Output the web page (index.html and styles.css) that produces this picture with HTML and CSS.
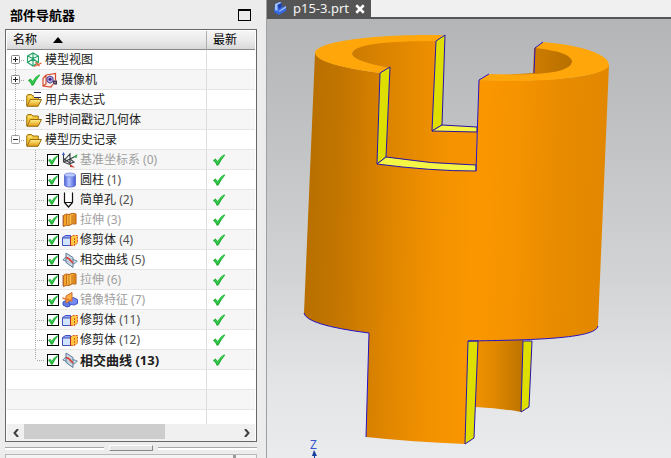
FILE: index.html
```html
<!DOCTYPE html>
<html lang="zh-CN">
<head>
<meta charset="utf-8">
<title>部件导航器</title>
<link rel="stylesheet" href="styles.css">
</head>
<body>
<svg class="defs" aria-hidden="true">
  <defs>
    <linearGradient id="gold" x1="0" y1="0" x2="0" y2="1"><stop offset="0" stop-color="#fff08a"/><stop offset="1" stop-color="#e09a10"/></linearGradient>
    <linearGradient id="blue" x1="0" x2="1"><stop offset="0" stop-color="#4a62dc"/><stop offset=".4" stop-color="#b4c4ff"/><stop offset="1" stop-color="#4458d8"/></linearGradient>
    <linearGradient id="amber" x1="0" x2="1"><stop offset="0" stop-color="#f29a1c"/><stop offset=".5" stop-color="#ffc653"/><stop offset="1" stop-color="#f09418"/></linearGradient>
  </defs>
  <symbol id="tick" viewBox="0 0 12 12"><path d="M0 6.300 2.600 4.500 4.500 7Q7 2.500 11.400.2L12 1.500Q8 6 5.600 11.300L3.800 11.700Q2.400 8.500 0 6.300Z" fill="#1fae36"/><path d="M2.300 6.200 4.500 9Q7 4.400 10.500 1.800" fill="none" stroke="#3fd056" stroke-width="1.100"/></symbol>
  <symbol id="views" viewBox="0 0 16 16"><path d="M1.500 4 7 1l5.500 3v6.500L7 14l-5.500-3.500ZM1.500 4 7 6.500 12.500 4M7 6.500V14M7 1v5.500M1.500 10.500 7 7l5.500 3.500" fill="#dff6ea" fill-opacity=".5" stroke="#25a068" stroke-width="1.100"/><path d="m8 14.500 7.500-3.500m-6-1 4 4" stroke="#e06032" stroke-width="1.300"/></symbol>
  <symbol id="camera" viewBox="0 0 16 16"><path d="m4 3 9.500-1.500v7M4 3 1 6.500V14l8 1 2-3M4 3v9l-3 2" fill="#fff0e8" stroke="#d34a31" stroke-width="1.200"/><path d="m5 5.500 3-1.500 3 1.500v4l-3 1.700-3-1.700Z" fill="#b9b0e2" stroke="#483a91"/><circle cx="8" cy="7.300" r="1.500" fill="#3a237f"/><path d="M11 8.500h4v4h-3l-1-1Z" fill="#44354d"/><path d="M12.500 10h1v1h-1z" fill="#ddd"/></symbol>
  <symbol id="folder" viewBox="0 0 16 16"><path d="M.7 14V3.700L2 2.500h3.500L7 4h5.300v3.500" fill="#f3c637" stroke="#9c7318"/><path d="M1 14.300 4.300 7.500h11.200L12 14.300Z" fill="url(#gold)" stroke="#9a6b0b"/><path d="M2 5h4" stroke="#fff4a0"/></symbol>
  <symbol id="csys" viewBox="0 0 16 16"><path d="M1.500 2v8L9 13M1.500 9 8 2v9L1.500 6.500M2 10 12 5M8 7l4 3-5 2" fill="none" stroke="#383e42" stroke-width="1.100"/><path d="M0 3 1.500 0 3 3" fill="#3854c8"/><path d="m11 5 4.500-3-1 4Z" fill="#30a24a"/><path d="m8 12 5 3.500-5-.5Z" fill="#c44033"/></symbol>
  <symbol id="cylinder" viewBox="0 0 16 16"><path d="M2.500 3v10c0 2.700 11 2.700 11 0V3Z" fill="url(#blue)" stroke="#5264c0" stroke-width=".8"/><ellipse cx="8" cy="3" rx="5.500" ry="2" fill="#b8caff" stroke="#7686d8" stroke-width=".8"/></symbol>
  <symbol id="hole" viewBox="0 0 16 16"><path d="M2.500.5V10.500l4 4.500 4-4.500V.5M2.500 10.500h8" fill="#fff" stroke="#111" stroke-width="1.200"/></symbol>
  <symbol id="extrude" viewBox="0 0 16 16"><path d="M1.500 3.500Q4 1 7 2.500q3-2 7-.5v10q-4-1-7 1.500-3-1-5.500 1Z" fill="url(#amber)" stroke="#b75b14"/><path d="M4.500 3v9.500M7 3v10M10 3v9M12 3v8" stroke="#bb6716" stroke-width=".9"/><path d="M1 3v11" stroke="#bb744c"/></symbol>
  <symbol id="trim" viewBox="0 0 16 16"><path d="M.5 13.500v-8l3-2h5v10Z" fill="#8fa6f2" stroke="#4251bd"/><path d="M1 6h7v7H1z" fill="#d3e4ff"/><path d="M.5 6H8" stroke="#4251bd"/><path d="m8.500 6 2-2.500h5v7.500l-3 2.500h-4Z" fill="#ffc83e"/><path d="m8.500 5.500 2-2h5V11l-3 2.500h-4ZM12.500 6v7" fill="none" stroke="#d8572f" stroke-dasharray="2 1"/><path d="M8.500 5v9" stroke="#bd2734"/></symbol>
  <symbol id="curve" viewBox="0 0 16 16"><path d="m.8 8 3-3 11.500 4-3 3Z" fill="#ccdce9" stroke="#66889f"/><path d="m4 1 7 4.500v10L4 10.500Z" fill="#c3d3df" fill-opacity=".8" stroke="#597c97"/><path d="m4 5.500 2.500 1 4.500 4.500" fill="none" stroke="#df3e37" stroke-width="1.700"/></symbol>
  <symbol id="mirror" viewBox="0 0 16 16"><path d="m1 10 3-1.500 4 1.500v4l-3 1-4-2Z" fill="#617be4" stroke="#3f54bf"/><path d="m7 8 4-2.500 4.500 2v4L12 13l-5-1Z" fill="#7189f1" stroke="#4257c5"/><path d="m4 4 6-3.500v7L4 11Z" fill="#ffb044" stroke="#cb6c34"/><path d="m.5 6 10 3" stroke="#e37833" stroke-width="1.500"/></symbol>
  <symbol id="plus" viewBox="0 0 9 9"><rect x=".5" y=".5" width="8" height="8" rx="1" fill="#fff" stroke="#888"/><path d="M2 4.500h5M4.500 2v5" stroke="#222"/></symbol>
  <symbol id="minus" viewBox="0 0 9 9"><rect x=".5" y=".5" width="8" height="8" rx="1" fill="#fff" stroke="#999"/><path d="M2 4.500h5" stroke="#222"/></symbol>
</svg>

<aside class="navigator">
  <header class="title"><h1>部件导航器</h1><button class="restore" aria-label="最大化"></button></header>
  <section class="tree">
    <div class="rows">
    <table>
      <colgroup><col><col class="status-col"></colgroup>
      <thead><tr><th><button class="sort">名称<svg viewBox="0 0 10 6"><path d="M5 0 10 6H0Z"/></svg></button></th><th>最新</th></tr></thead>
      <tbody>
        <tr><td><div class="item"><span class="branch first"><button class="expander" aria-label="展开"><svg><use href="#plus"/></svg></button></span><svg class="icon"><use href="#views"/></svg><span>模型视图</span></div></td><td></td></tr>
        <tr><td><div class="item"><span class="branch"><button class="expander" aria-label="展开"><svg><use href="#plus"/></svg></button></span><svg class="tick lead"><use href="#tick"/></svg><svg class="icon"><use href="#camera"/></svg><span>摄像机</span></div></td><td></td></tr>
        <tr><td><div class="item"><span class="branch"></span><span class="expression"><svg class="icon"><use href="#folder"/></svg></span><span>用户表达式</span></div></td><td></td></tr>
        <tr><td><div class="item"><span class="branch"></span><svg class="icon"><use href="#folder"/></svg><span>非时间戳记几何体</span></div></td><td></td></tr>
        <tr><td><div class="item"><span class="branch last"><button class="expander" aria-label="折叠"><svg><use href="#minus"/></svg></button></span><svg class="icon"><use href="#folder"/></svg><span>模型历史记录</span></div></td><td></td></tr>
        <tr><td><label class="item child dim"><span class="branch"></span><span class="box"><input type="checkbox" checked><svg class="tick"><use href="#tick"/></svg></span><svg class="icon"><use href="#csys"/></svg><span>基准坐标系 (0)</span></label></td><td><svg class="tick"><use href="#tick"/></svg></td></tr>
        <tr><td><label class="item child"><span class="branch"></span><span class="box"><input type="checkbox" checked><svg class="tick"><use href="#tick"/></svg></span><svg class="icon"><use href="#cylinder"/></svg><span>圆柱 <span class="count">(1)</span></span></label></td><td><svg class="tick"><use href="#tick"/></svg></td></tr>
        <tr><td><label class="item child"><span class="branch"></span><span class="box"><input type="checkbox" checked><svg class="tick"><use href="#tick"/></svg></span><svg class="icon"><use href="#hole"/></svg><span>简单孔 <span class="count">(2)</span></span></label></td><td><svg class="tick"><use href="#tick"/></svg></td></tr>
        <tr><td><label class="item child dim"><span class="branch"></span><span class="box"><input type="checkbox" checked><svg class="tick"><use href="#tick"/></svg></span><svg class="icon"><use href="#extrude"/></svg><span>拉伸 (3)</span></label></td><td><svg class="tick"><use href="#tick"/></svg></td></tr>
        <tr><td><label class="item child"><span class="branch"></span><span class="box"><input type="checkbox" checked><svg class="tick"><use href="#tick"/></svg></span><svg class="icon"><use href="#trim"/></svg><span>修剪体 <span class="count">(4)</span></span></label></td><td><svg class="tick"><use href="#tick"/></svg></td></tr>
        <tr><td><label class="item child"><span class="branch"></span><span class="box"><input type="checkbox" checked><svg class="tick"><use href="#tick"/></svg></span><svg class="icon"><use href="#curve"/></svg><span>相交曲线 <span class="count">(5)</span></span></label></td><td><svg class="tick"><use href="#tick"/></svg></td></tr>
        <tr><td><label class="item child dim"><span class="branch"></span><span class="box"><input type="checkbox" checked><svg class="tick"><use href="#tick"/></svg></span><svg class="icon"><use href="#extrude"/></svg><span>拉伸 (6)</span></label></td><td><svg class="tick"><use href="#tick"/></svg></td></tr>
        <tr><td><label class="item child dim"><span class="branch"></span><span class="box"><input type="checkbox" checked><svg class="tick"><use href="#tick"/></svg></span><svg class="icon"><use href="#mirror"/></svg><span>镜像特征 (7)</span></label></td><td><svg class="tick"><use href="#tick"/></svg></td></tr>
        <tr><td><label class="item child"><span class="branch"></span><span class="box"><input type="checkbox" checked><svg class="tick"><use href="#tick"/></svg></span><svg class="icon"><use href="#trim"/></svg><span>修剪体 <span class="count">(11)</span></span></label></td><td><svg class="tick"><use href="#tick"/></svg></td></tr>
        <tr><td><label class="item child"><span class="branch"></span><span class="box"><input type="checkbox" checked><svg class="tick"><use href="#tick"/></svg></span><svg class="icon"><use href="#trim"/></svg><span>修剪体 <span class="count">(12)</span></span></label></td><td><svg class="tick"><use href="#tick"/></svg></td></tr>
        <tr><td><label class="item child current"><span class="branch last"></span><span class="box"><input type="checkbox" checked><svg class="tick"><use href="#tick"/></svg></span><svg class="icon"><use href="#curve"/></svg><span>相交曲线 (13)</span></label></td><td><svg class="tick"><use href="#tick"/></svg></td></tr>
        <tr><td></td><td></td></tr>
        <tr><td></td><td></td></tr>
        <tr><td></td><td></td></tr>
      </tbody>
    </table>
    </div>
    <div class="scrollbar">
      <button aria-label="向左滚动"><svg viewBox="0 0 6 8"><path d="M5 0 1.500 4 5 8"/></svg></button>
      <div class="track"><div class="thumb"></div></div>
      <button aria-label="向右滚动"><svg viewBox="0 0 6 8"><path d="M1 0 4.500 4 1 8"/></svg></button>
    </div>
  </section>
  <div class="splitter"><i></i></div>
  <section class="next"></section>
</aside>

<main>
  <nav><div class="tab">
    <svg class="part" viewBox="0 0 14 14"><path d="m2 2 5-2 1.500 1v4L13 4v5l-7 4-5-3Z" fill="#3569df"/><path d="m2 2 5-2 1.500 1-4 2v6L2 8ZM6 9l7-5v2L6 10Z" fill="#9fc2ff"/><path d="m4.500 3 4-2v4L6 7Z" fill="#1c3fa8"/></svg>
    <a href="#scene">p15-3.prt</a>
    <button aria-label="关闭"><svg viewBox="0 0 8 8"><path d="m1 1 6 6M7 1 1 7"/></svg></button>
  </div></nav>
  <svg id="scene" class="scene" viewBox="267 19 404 439" preserveAspectRatio="xMidYMid meet" role="img" aria-label="p15-3">
    <defs>
      <linearGradient id="body" gradientUnits="userSpaceOnUse" x1="309" y1="200" x2="604" y2="209"><stop offset="0" stop-color="#b97000"/><stop offset=".1" stop-color="#c27500"/><stop offset=".25" stop-color="#db8300"/><stop offset=".42" stop-color="#f29100"/><stop offset=".57" stop-color="#fa9700"/><stop offset=".7" stop-color="#f59300"/><stop offset=".85" stop-color="#e88b00"/><stop offset="1" stop-color="#e28700"/></linearGradient>
      <linearGradient id="bore" gradientUnits="userSpaceOnUse" x1="352" y1="0" x2="450" y2="0"><stop offset="0" stop-color="#cc7b00"/><stop offset=".4" stop-color="#dd8500"/><stop offset="1" stop-color="#f59300"/></linearGradient>
      <linearGradient id="boreRight" gradientUnits="userSpaceOnUse" x1="534" y1="0" x2="572" y2="0"><stop offset="0" stop-color="#cd7c00"/><stop offset="1" stop-color="#b87000"/></linearGradient>
      <linearGradient id="leg" gradientUnits="userSpaceOnUse" x1="478" y1="0" x2="522" y2="0"><stop offset="0" stop-color="#ee9000"/><stop offset=".4" stop-color="#df8700"/><stop offset="1" stop-color="#bd7400"/></linearGradient>
    </defs>
    <path fill="url(#boreRight)" d="M534 48 545 43 580 55 570 74 489 76 533 73Z"/>
    <path fill="url(#bore)" d="M436 40Q352 39 352 54Q353 64 390 68L386 158Q430 165 476 166L477 131 432 131Z"/>
    <path fill="url(#leg)" d="M477 338H523L521 412Q500 408 475 407Z"/>
    <path fill="url(#body)" d="M315 53Q320 65 380 73L377 164Q430 171 476 171L479 80Q600 83 609 64L598 326C596 339 530 340 468 341L465 444Q413 442 366 437L369 333Q306 325 304 313Z"/>
    <path fill="#ffa70a" d="M315 53C315 42 370 34 443 35L436 41C390 41 352 44 352 54Q353 61 390 68L380 73Q317 65 315 53Z"/>
    <path fill="#ffa70a" d="M543 42C580 45 609 54 609 65C609 75 550 84 479 80L489 74Q570 77 572 62Q572 52 535 48Z"/>
    <g class="cuts">
      <path d="m436 41 9-6-3 90-10 6Z"/>
      <path class="pale" d="m432 131 10-6 35 2v5Z"/>
      <path d="m380 73 10-6-4 90-9 7Z"/>
      <path class="pale" d="m377 164 9-7Q430 164 476 165V171Q430 171 377 164Z"/>
      <path d="M468 341H478L474 438 465 444Z"/>
      <path d="M523 341H532L529 407 521 412Z"/>
    </g>
    <path class="edge" d="m479 80-3 91M479 80l10-6M534 73l1-25 8-6M304 313Q306 325 369 333L366 437M468 341C530 340 596 339 598 326"/>
    <text class="axis" x="310" y="449">Z</text>
    <path d="m314 450-2 6h2v2h1v-2h2Z" fill="#163b9c"/>
  </svg>
</main>
</body>
</html>
```
FILE: styles.css
```css
* { box-sizing: border-box; }

body {
  margin: 0;
  height: 100vh;
  display: flex;
  overflow: hidden;
  background: #ececec;
  color: #202020;
  font: 12px/20px "Noto Sans", "Noto Sans CJK SC", sans-serif;
}

button {
  margin: 0;
  padding: 0;
  border: 0;
  background: none;
  color: inherit;
  font: inherit;
}

svg { display: block; }
.defs { position: absolute; width: 0; height: 0; }

/* Navigator panel */
.navigator {
  flex: 0 0 267px;
  display: flex;
  flex-direction: column;
  padding: 0 9px 0 5px;
  border-right: 1px solid #a0a0a0;
}

.title {
  flex: 0 0 29px;
  display: flex;
  align-items: center;
  justify-content: space-between;
  padding: 0 6px 0 5px;
}

h1 { margin: 0; font-size: 13px; color: #000; }

.restore {
  width: 13px;
  height: 12px;
  border: 1px solid #000;
  border-top-width: 2px;
}

.tree {
  flex: 1;
  min-height: 0;
  display: flex;
  flex-direction: column;
  border: 1px solid #686868;
  padding: 1px 1px 0;
  background: #fff;
}

.rows { flex: 1; min-height: 0; overflow: hidden; }

table { width: 100%; table-layout: fixed; border-collapse: separate; border-spacing: 0; }
.status-col { width: 49px; }

th {
  height: 19px;
  padding: 0 6px;
  line-height: 18px;
  font-weight: normal;
  text-align: left;
  color: #000;
  background: linear-gradient(#f5f5f5, #e9e9e9 55%, #d8d8d8);
  border-bottom: 1px solid #888;
}
th + th { border-left: 1px solid #b0b0b0; }

.sort { display: flex; align-items: center; gap: 16px; }
.sort svg { width: 10px; height: 6px; }

td { height: 20px; padding: 0; border-bottom: 1px solid #e6e6e6; }
td + td { padding-left: 6px; border-left: 1px solid #dedede; }
tr:nth-child(even) td { background: #f6f6f6; }

.item { display: flex; align-items: center; height: 19px; padding-left: 4px; white-space: nowrap; }
.item.child { padding-left: 28px; }
.dim { color: #a0a0a0; }
.current { font-size: 13px; font-weight: bold; }
.count { color: #505050; }

.icon { width: 16px; height: 16px; margin-right: 3px; }
.child .icon { margin: 0 2px 0 3px; }
.tick { width: 12px; height: 12px; }
.lead { margin: 0 2px; }

/* Two short bars over the folder of expressions */
.expression { position: relative; }
.expression::after {
  content: "";
  position: absolute;
  top: 0;
  right: 4px;
  width: 7px;
  height: 4px;
  border: solid #26265a;
  border-width: 1px 0;
  background: #fff;
}

/* Dotted tree guides */
.branch {
  position: relative;
  width: 15px;
  height: 20px;
  display: flex;
  align-items: center;
}
.child .branch { width: 12px; }
.branch::before {
  content: "";
  position: absolute;
  left: 4px;
  top: 0;
  bottom: 0;
  width: 1px;
  background: repeating-linear-gradient(#a8a8a8 0 1px, transparent 1px 2px);
}
.branch::after {
  content: "";
  position: absolute;
  left: 5px;
  right: 1px;
  top: 10px;
  height: 1px;
  background: repeating-linear-gradient(90deg, transparent 0 1px, #a8a8a8 1px 2px);
}
.child .branch::before { left: 0; }
.child .branch::after { left: 1px; right: 3px; }
.branch.first::before { top: 10px; }
.branch.last::before { bottom: 10px; }
.expander { position: relative; z-index: 1; }
.expander svg { width: 9px; height: 9px; }

.box { display: grid; width: 12px; height: 12px; }
.box > * { grid-area: 1 / 1; place-self: center; }
.box input {
  appearance: none;
  width: 12px;
  height: 12px;
  margin: 0;
  border: 1px solid #000;
  background: #fff;
}
.box .tick { width: 10px; height: 10px; pointer-events: none; }
.box input:not(:checked) + .tick { visibility: hidden; }

.scrollbar { flex: 0 0 17px; display: flex; background: #f0f0f0; }
.scrollbar button { width: 17px; display: grid; place-items: center; }
.scrollbar svg { width: 6px; height: 8px; }
.scrollbar path { fill: none; stroke: #404040; stroke-width: 2; }
.track { flex: 1; }
.thumb { width: 66%; height: 15px; background: #cdcdcd; }

.splitter {
  flex: 0 0 12px;
  display: flex;
  align-items: center;
  gap: 5px;
}
.splitter::before, .splitter::after {
  content: "";
  flex: 1;
  height: 2px;
  background: #fff;
  border-top: 1px solid #a8a8a8;
}
.splitter i {
  width: 44px;
  height: 6px;
  background: #e4e4e4;
  border: 1px solid #fff;
  border-right-color: #888;
  border-bottom-color: #888;
}
.next {
  flex: 0 0 4px;
  border: 1px solid #b8b8b8;
  border-bottom: 0;
  background: linear-gradient(90deg, transparent 91%, #999 91%, #999 92%, transparent 92%), #f4f4f4;
}

/* Graphics area */
main { flex: 1; min-width: 0; display: flex; flex-direction: column; }

nav {
  flex: 0 0 19px;
  display: flex;
  background: #f0f0f0;
  border-bottom: 2px solid #555;
}
.tab {
  display: flex;
  align-items: center;
  padding: 0 6px;
  background: #555;
  color: #f4f4f4;
  font-size: 13px;
  line-height: 17px;
}
.tab a { margin: 0 6px; color: inherit; text-decoration: none; }
.part { width: 14px; height: 14px; }
.tab button svg { width: 10px; height: 10px; }
.tab button path { stroke: #fff; stroke-width: 2; }

.scene {
  flex: 1;
  min-height: 0;
  width: 100%;
  background: linear-gradient(#b4b5b7, #c3c4c6 30%, #d3d4d6 60%, #e4e5e7 84%, #e9ebed);
}
.cuts { fill: #dedf00; stroke: #2713a5; stroke-linejoin: round; }
.cuts .pale { fill: #f5f545; }
.edge { fill: none; stroke: #2713c5; }
.axis { font-size: 12px; fill: #3454d0; }
```
